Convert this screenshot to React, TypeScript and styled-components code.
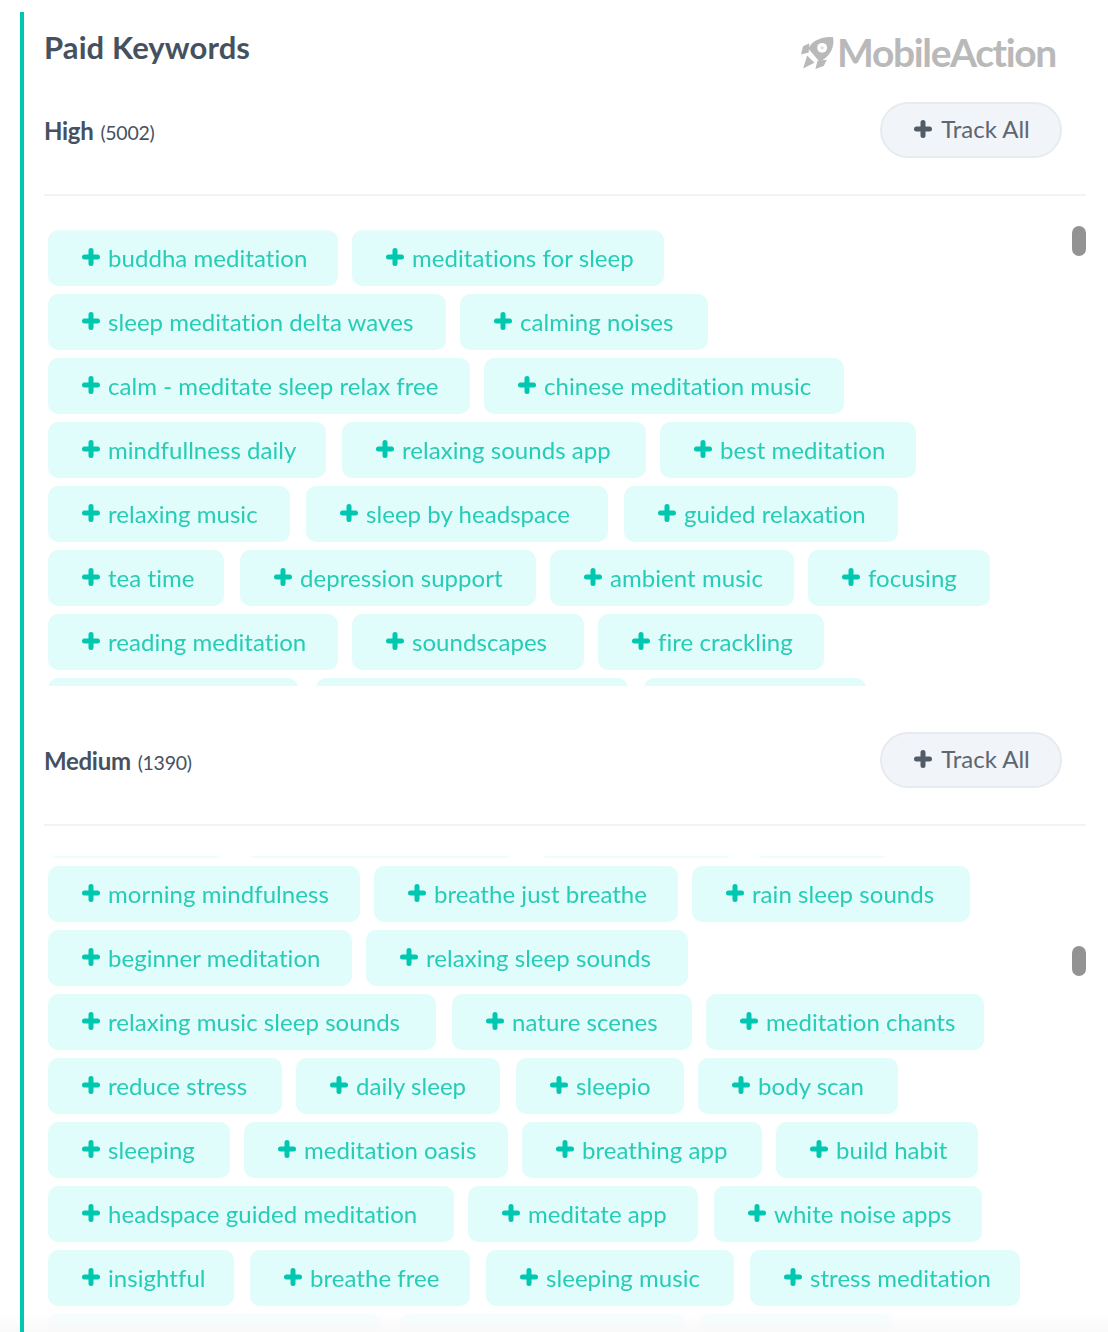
import React from 'react';
import styled, { createGlobalStyle } from 'styled-components';

type Keyword = { label?: string; w: number; gap?: number };

const highKeywords: Keyword[] = [
	{ label: 'buddha meditation', w: 290 },
	{ label: 'meditations for sleep', w: 312 },
	{ label: 'sleep meditation delta waves', w: 398 },
	{ label: 'calming noises', w: 248 },
	{ label: 'calm - meditate sleep relax free', w: 422 },
	{ label: 'chinese meditation music', w: 360 },
	{ label: 'mindfullness daily', w: 278, gap: 16 },
	{ label: 'relaxing sounds app', w: 304 },
	{ label: 'best meditation', w: 256 },
	{ label: 'relaxing music', w: 242, gap: 16 },
	{ label: 'sleep by headspace', w: 302, gap: 16 },
	{ label: 'guided relaxation', w: 274 },
	{ label: 'tea time', w: 176, gap: 16 },
	{ label: 'depression support', w: 296 },
	{ label: 'ambient music', w: 244 },
	{ label: 'focusing', w: 182 },
	{ label: 'reading meditation', w: 290 },
	{ label: 'soundscapes', w: 232 },
	{ label: 'fire crackling', w: 226 },
	{ w: 250, gap: 18 },
	{ w: 312, gap: 16 },
	{ w: 222 },
];

const mediumKeywords: Keyword[] = [
	{ w: 176, gap: 22 },
	{ w: 268, gap: 24 },
	{ w: 196, gap: 20 },
	{ w: 136 },
	{ label: 'morning mindfulness', w: 312 },
	{ label: 'breathe just breathe', w: 304 },
	{ label: 'rain sleep sounds', w: 278 },
	{ label: 'beginner meditation', w: 304 },
	{ label: 'relaxing sleep sounds', w: 322 },
	{ label: 'relaxing music sleep sounds', w: 388, gap: 16 },
	{ label: 'nature scenes', w: 240 },
	{ label: 'meditation chants', w: 278 },
	{ label: 'reduce stress', w: 234 },
	{ label: 'daily sleep', w: 204, gap: 16 },
	{ label: 'sleepio', w: 168 },
	{ label: 'body scan', w: 200 },
	{ label: 'sleeping', w: 182 },
	{ label: 'meditation oasis', w: 264 },
	{ label: 'breathing app', w: 240 },
	{ label: 'build habit', w: 202 },
	{ label: 'headspace guided meditation', w: 406 },
	{ label: 'meditate app', w: 230, gap: 16 },
	{ label: 'white noise apps', w: 268 },
	{ label: 'insightful', w: 186, gap: 16 },
	{ label: 'breathe free', w: 220, gap: 16 },
	{ label: 'sleeping music', w: 248, gap: 16 },
	{ label: 'stress meditation', w: 270 },
	{ w: 332, gap: 20 },
	{ w: 284, gap: 16 },
	{ w: 192 },
];

const GlobalStyle = createGlobalStyle`
	html, body {
		margin: 0;
		padding: 0;
		background: #ffffff;
	}
	* {
		box-sizing: border-box;
	}
`;

const Page = styled.div`
	font-family: 'Lato', 'Liberation Sans', sans-serif;
	height: 1332px;
	overflow: hidden;
	padding: 12px 22px 0 20px;
	position: relative;
	width: 1108px;
`;

const Panel = styled.div`
	border-left: 4px solid #00c8b0;
	height: 1320px;
	padding-left: 20px;
	position: relative;
	z-index: 1;
`;

const TitleRow = styled.div`
	align-items: flex-start;
	display: flex;
	height: 90px;
	justify-content: space-between;
	padding-right: 30px;
`;

const Title = styled.h1`
	color: #465160;
	font-size: 31px;
	font-weight: 700;
	letter-spacing: 0.1px;
	line-height: 36px;
	margin: 17px 0 0;
`;

const Logo = styled.div`
	align-items: center;
	color: #b9b9b9;
	display: flex;
	font-size: 39px;
	font-weight: 700;
	gap: 3px;
	letter-spacing: -1.35px;
	line-height: 40px;
	margin-top: 20px;
`;

const SectionHead = styled.div`
	align-items: center;
	border-bottom: 2px solid #f2f3f3;
	display: flex;
	height: 94px;
	justify-content: space-between;
	padding: 0 24px 36px 0;
`;

const SectionName = styled.div`
	color: #465160;
	font-size: 24px;
	font-weight: 700;
	letter-spacing: -0.3px;
`;

const SectionCount = styled.span`
	font-size: 19.5px;
	font-weight: 400;
	margin-left: 7px;
`;

const TrackButton = styled.button`
	align-items: center;
	background: #f1f4f8;
	border: 2px solid #e7ebf0;
	border-radius: 28px;
	color: #5d6671;
	cursor: pointer;
	display: flex;
	font-family: inherit;
	font-size: 24px;
	gap: 9px;
	height: 56px;
	justify-content: center;
	padding: 0 0 3px 2px;
	width: 182px;
`;

const ScrollArea = styled.div<{ $height: number; $after: number }>`
	height: ${({ $height }) => $height}px;
	margin: 30px 0 ${({ $after }) => $after}px;
	position: relative;
`;

const Clip = styled.div`
	height: 100%;
	mask-image: linear-gradient(to bottom, rgba(0, 0, 0, 0.55) 0, #000 9px);
	overflow: hidden;
`;

const KeywordList = styled.div<{ $offset: number }>`
	display: flex;
	flex-wrap: wrap;
	margin-top: ${({ $offset }) => $offset}px;
	padding: 0 36px 0 4px;
	row-gap: 8px;
`;

const Chip = styled.div<{ $w: number; $gap: number }>`
	align-items: center;
	background: #e0fcfb;
	border-radius: 10px;
	color: #27ccb6;
	display: flex;
	font-size: 24px;
	gap: 8px;
	height: 56px;
	letter-spacing: 0.05px;
	margin-right: ${({ $gap }) => $gap}px;
	padding: 0 0 2px 34px;
	white-space: nowrap;
	width: ${({ $w }) => $w}px;
`;

const Thumb = styled.div<{ $top: number }>`
	background: #939393;
	border-radius: 7px;
	height: 30px;
	position: absolute;
	right: 0;
	top: ${({ $top }) => $top}px;
	width: 14px;
`;

const BottomFade = styled.div`
	background: linear-gradient(to bottom, rgba(255, 255, 255, 0) 0, rgba(254, 254, 254, 0.7) 10px, #f9f9f9 100%);
	bottom: 0;
	height: 28px;
	left: 0;
	position: absolute;
	right: 0;
	z-index: 2;
`;

const BarOver = styled.div`
	background: #00c8b0;
	bottom: 0;
	height: 28px;
	left: 20px;
	position: absolute;
	width: 4px;
	z-index: 3;
`;

const PlusIcon = ({ color, size = 18 }: { color: string; size?: number }) => (
	<svg width={size} height={size} viewBox="0 0 18 18" fill="none" style={{ flexShrink: 0 }}>
		<path d="M9 2.5v13M2.5 9h13" stroke={color} strokeWidth="5" strokeLinecap="round" />
	</svg>
);

const RocketMark = () => (
	<svg width="33" height="33" viewBox="0 0 32 32" fill="#b9b9b9" style={{ flexShrink: 0 }}>
		<path d="M31 1C21 0 11 4 7 12L18 25C28 20 33 11 31 1Z" />
		<circle cx="20.5" cy="11.5" r="4.8" fill="#ffffff" />
		<circle cx="20.5" cy="11.5" r="1.6" fill="#dddddd" />
		<path d="M8 7L2 10L0 18L7.5 16Z" />
		<path d="M25 23L22 29L14 32L16 24Z" />
		<path d="M6 19L13 26L2 31.5Z" />
	</svg>
);

const KeywordBlock = ({ items, offset }: { items: Keyword[]; offset: number }) => (
	<KeywordList $offset={offset}>
		{items.map((item, i) => (
			<Chip key={i} $w={item.w} $gap={item.gap ?? 14}>
				{item.label && <PlusIcon color="#00c8b0" />}
				{item.label}
			</Chip>
		))}
	</KeywordList>
);

const SectionHeader = ({ name, count }: { name: string; count: number }) => (
	<SectionHead>
		<SectionName>
			{name}
			<SectionCount>({count})</SectionCount>
		</SectionName>
		<TrackButton>
			<PlusIcon color="#525c67" />
			Track All
		</TrackButton>
	</SectionHead>
);

export default function App() {
	return (
		<Page>
			<GlobalStyle />
			<Panel>
				<TitleRow>
					<Title>Paid Keywords</Title>
					<Logo>
						<RocketMark />
						MobileAction
					</Logo>
				</TitleRow>
				<SectionHeader name="High" count={5002} />
				<ScrollArea $height={460} $after={46}>
					<Clip>
						<KeywordBlock items={highKeywords} offset={4} />
					</Clip>
					<Thumb $top={0} />
				</ScrollArea>
				<SectionHeader name="Medium" count={1390} />
				<ScrollArea $height={476} $after={0}>
					<Clip>
						<KeywordBlock items={mediumKeywords} offset={-54} />
					</Clip>
					<Thumb $top={90} />
				</ScrollArea>
			</Panel>
			<BottomFade />
			<BarOver />
		</Page>
	);
}
